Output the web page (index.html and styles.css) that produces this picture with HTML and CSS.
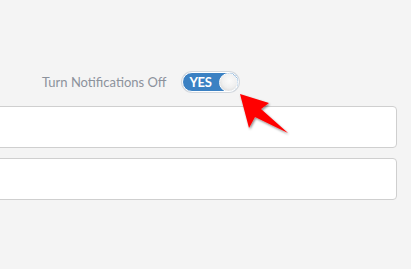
FILE: index.html
```html
<!DOCTYPE html>
<html>
<head>
<meta charset="utf-8">
<link rel="stylesheet" href="styles.css">
</head>
<body>
<div class="page">
  <div class="setting">
    <span class="label">Turn Notifications Off</span>
    <span class="toggle"><span class="toggle-text">YES</span><span class="knob"></span></span>
  </div>
  <div class="field"></div>
  <div class="field"></div>
  <svg class="arrow" width="60" height="50" viewBox="230 88 60 50">
    <defs>
      <filter id="sh" x="-20%" y="-20%" width="140%" height="140%">
        <feDropShadow dx="1" dy="1.5" stdDeviation="1" flood-color="#000" flood-opacity="0.45"/>
      </filter>
    </defs>
    <polygon filter="url(#sh)" fill="#ff0000" points="240,94 269,103 261,109 288,133 255,117 249,128"/>
  </svg>
</div>
</body>
</html>
```
FILE: styles.css
```css
html, body {
  margin: 0;
  padding: 0;
  background: #f4f4f4;
}
.page {
  position: relative;
  width: 411px;
  height: 269px;
  overflow: hidden;
  font-family: Lato, "Open Sans", sans-serif;
  padding-top: 72px;
  box-sizing: border-box;
}
.setting {
  display: flex;
  align-items: center;
  padding-left: 42px;
  gap: 15px;
  height: 20px;
}
.label {
  font-size: 13px;
  color: #8c929c;
}
.toggle {
  display: flex;
  align-items: center;
  justify-content: space-between;
  width: 48px;
  height: 18px;
  border: 1.5px solid #fff;
  border-radius: 11px;
  background: #3b81c3;
  box-shadow: 0 0 0 1px #d3d8de;
  padding: 0 0 0 7px;
  box-sizing: content-box;
}
.toggle-text {
  color: #fff;
  font-weight: 700;
  font-size: 13px;
  letter-spacing: -0.3px;
}
.knob {
  width: 17px;
  height: 17px;
  border-radius: 50%;
  background: radial-gradient(circle at 55% 40%, #fbfbfb 0%, #f0f0f0 50%, #dcdcdc 80%, #bdbdbd 100%);
  border: 1px solid #fff;
  box-sizing: content-box;
  margin-right: -0.5px;
}
.field {
  margin: 14px 14px 0 -10px;
  height: 40px;
  background: #fff;
  border: 1px solid #cfcfcf;
  border-radius: 4px;
}
.field + .field {
  margin-top: 10px;
}
.arrow {
  position: absolute;
  left: 230px;
  top: 88px;
}
```
